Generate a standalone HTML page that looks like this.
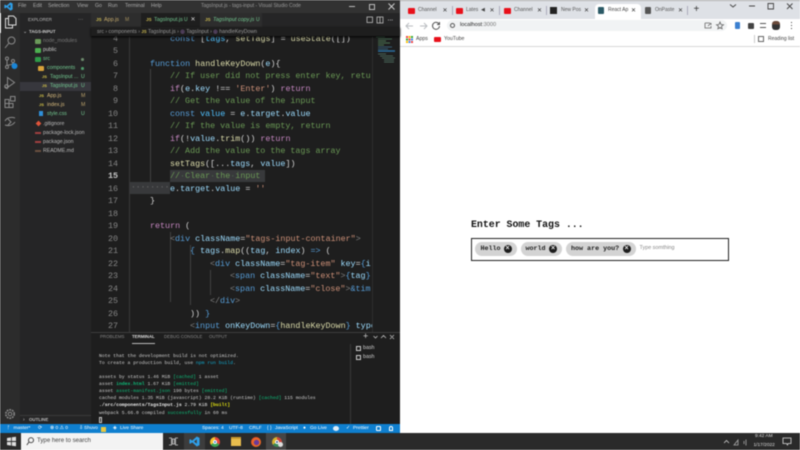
<!DOCTYPE html>
<html><head><meta charset="utf-8"><style>
*{box-sizing:border-box}
html,body{margin:0;padding:0;width:800px;height:450px;overflow:hidden;background:#fff}
body{font-family:"Liberation Sans",sans-serif;position:relative}
#wrap{position:absolute;left:0;top:0;width:800px;height:450px;overflow:hidden;filter:blur(.42px)}
.a{position:absolute;white-space:pre;line-height:1}
.b{position:absolute}
.m{font-family:"Liberation Mono",monospace}
.ln{position:absolute;left:90px;width:28px;text-align:right;color:#858585;font:8.4px/12px "Liberation Mono",monospace}
.c{position:absolute;left:130px;white-space:pre;color:#d4d4d4;font:8.37px/12px "Liberation Mono",monospace}
.k{color:#c586c0}.f{color:#dcdcaa}.v{color:#9cdcfe}.s{color:#ce9178}.g{color:#6a9955}.bl{color:#569cd6}.p{color:#808080}.bc{color:#4fc1ff}
.t5{position:absolute;left:99px;white-space:pre;color:#ccc;font:4.76px/7px "Liberation Mono",monospace}
.gr{color:#0dbc79}.cy{color:#11a8cd}.yl{color:#e5e510}
.side{position:absolute;font-size:5.2px;line-height:8px;white-space:pre;color:#ccc}
.tab{position:absolute;top:4px;height:13px;font-size:5px;line-height:13px;color:#555;white-space:pre}
.yt{position:absolute;width:7px;height:5.5px;top:8px;background:#e8101a;border-radius:1px}
.sb{position:absolute;top:424.5px;font-size:4.9px;line-height:8px;color:#fff;white-space:pre}
.x{position:absolute;top:6.5px;font-size:6px;line-height:8px;color:#333}
.sep{position:absolute;top:6px;width:1px;height:9px;background:#aab}
.tag{position:absolute;top:241.5px;height:14.5px;background:#d3d3d3;border-radius:7.5px}
.tag span{position:absolute;left:5.5px;top:0;font:bold 6.7px/14.5px "Liberation Mono",monospace;color:#222;white-space:pre}
.tag i{position:absolute;top:3.25px;width:8px;height:8px;border-radius:50%;background:#1c1c1c;color:#eee;font:normal bold 7px/8px "Liberation Sans",sans-serif;text-align:center}
</style></head><body><div id="wrap">

<!-- VS Code -->
<div class="b" style="left:0;top:0;width:400px;height:433px;background:#1e1e1e"></div>
<div class="b" style="left:0;top:0;width:400px;height:13px;background:#323232"></div>
<svg class="b" style="left:4px;top:2px" width="9" height="9" viewBox="0 0 24 24"><path d="M17 1l6 3v16l-6 3L7 14l-4 3-2-1V8l2-1 4 3zM17 7l-6 5 6 5z" fill="#2f9fe8" fill-rule="evenodd"/></svg>
<div class="a" style="left:18px;top:3.5px;font-size:5.2px;color:#aaa">File</div>
<div class="a" style="left:33px;top:3.5px;font-size:5.2px;color:#aaa">Edit</div>
<div class="a" style="left:48px;top:3.5px;font-size:5.2px;color:#aaa">Selection</div>
<div class="a" style="left:77px;top:3.5px;font-size:5.2px;color:#aaa">View</div>
<div class="a" style="left:95px;top:3.5px;font-size:5.2px;color:#aaa">Go</div>
<div class="a" style="left:108px;top:3.5px;font-size:5.2px;color:#aaa">Run</div>
<div class="a" style="left:125px;top:3.5px;font-size:5.2px;color:#aaa">Terminal</div>
<div class="a" style="left:151px;top:3.5px;font-size:5.2px;color:#aaa">Help</div>
<div class="a" style="left:201px;top:3.5px;font-size:5px;color:#999">TagsInput.js - tags-input - Visual Studio Code</div>
<div class="b" style="left:349px;top:6px;width:6px;height:1px;background:#bbb"></div>
<div class="b" style="left:369px;top:3.5px;width:6px;height:6px;border:1px solid #bbb"></div>
<svg class="b" style="left:388px;top:3px" width="7" height="7" viewBox="0 0 7 7"><path d="M.5.5l6 6M6.5.5l-6 6" stroke="#ccc"/></svg>

<!-- activity bar -->
<div class="b" style="left:0;top:13px;width:20px;height:411px;background:#2c2c2c"></div>
<div class="b" style="left:0;top:13px;width:1px;height:20px;background:#ddd"></div>
<svg class="b" style="left:4px;top:15px" width="13" height="14" viewBox="0 0 13 14" fill="none" stroke="#ddd" stroke-width="1"><path d="M4.5 1h5l2.500 2.500V10H4.500zM4.500 3.500H1.500V13H8.500V10"/></svg>
<svg class="b" style="left:4px;top:36px" width="12" height="13" viewBox="0 0 12 13" fill="none" stroke="#8a8a8a" stroke-width="1"><circle cx="7.500" cy="4.500" r="3.500"/><path d="M5 7l-4 5"/></svg>
<svg class="b" style="left:4px;top:56px" width="14" height="14" viewBox="0 0 14 14" fill="none" stroke="#8a8a8a" stroke-width="1"><circle cx="3" cy="2.500" r="1.500"/><circle cx="3" cy="11" r="1.500"/><circle cx="9" cy="5" r="1.500"/><path d="M3 4v5.500M4 9c3 0 5-1 5-2.500"/><circle cx="10.500" cy="10" r="3" fill="#1a85d6" stroke="none"/></svg>
<svg class="b" style="left:4px;top:76px" width="12" height="14" viewBox="0 0 12 14" fill="none" stroke="#8a8a8a" stroke-width="1"><path d="M3.500 1.500l7 5-7 5zM1 10.500l2.500 2.500"/><circle cx="2.500" cy="10.500" r="1.800"/></svg>
<svg class="b" style="left:4px;top:96px" width="12" height="13" viewBox="0 0 12 13" fill="none" stroke="#8a8a8a" stroke-width="1"><path d="M1 3.500h4v4h4v4H1zM1 7.500h4v4M6.500.5h4.500v4.500H6.500z"/></svg>
<svg class="b" style="left:4px;top:116px" width="12" height="12" viewBox="0 0 12 12" fill="none" stroke="#8a8a8a" stroke-width="1"><path d="M1 5c2-4 7-4 10-3M1 9c3 1 7 1 10-3M4 3l3 3-3 3"/></svg>
<svg class="b" style="left:4px;top:408px" width="12" height="12" viewBox="0 0 12 12" fill="none" stroke="#8a8a8a" stroke-width="1"><circle cx="6" cy="6" r="1.800"/><circle cx="6" cy="6" r="4.200" stroke-dasharray="1.800 .9" stroke-width="1.600"/></svg>

<!-- sidebar -->
<div class="b" style="left:20px;top:13px;width:71px;height:411px;background:#252526"></div>
<div class="b" style="left:20px;top:82px;width:71px;height:9px;background:#37373d"></div>
<div class="side" style="left:28px;top:16px;font-size:4.4px;color:#bbb">EXPLORER</div>
<div class="side" style="left:78px;top:16px;color:#aaa">···</div>
<div class="side" style="left:29px;top:28px;font-weight:bold;font-size:4.4px;color:#ccc">TAGS-INPUT</div>
<div class="side" style="left:23px;top:28px;color:#ccc;font-size:5px">⌄</div>
<div class="side" style="left:43px;top:37px;color:#777">node_modules</div>
<div class="b" style="left:35px;top:38.5px;width:6px;height:5px;background:#6b9a5a;border-radius:1px"></div>
<div class="side" style="left:43px;top:46px;color:#ccc">public</div>
<div class="b" style="left:35px;top:47.5px;width:6px;height:5px;background:#4cb050;border-radius:1px"></div>
<div class="side" style="left:43px;top:55px;color:#73c991">src</div>
<div class="b" style="left:35px;top:56.5px;width:6px;height:5px;background:#2e9a48;border-radius:1px"></div>
<div class="side" style="left:47px;top:64px;color:#73c991">components</div>
<div class="b" style="left:38px;top:65.5px;width:6px;height:5px;background:#d9a23a;border-radius:1px"></div>
<div class="b" style="left:81px;top:58px;width:2.5px;height:2.5px;border-radius:50%;background:#6c8a6c"></div>
<div class="b" style="left:81px;top:67px;width:2.5px;height:2.5px;border-radius:50%;background:#4f9a6a"></div>
<div class="side" style="left:50px;top:73px;color:#73c991">TagsInput ...</div>
<div class="side" style="left:50px;top:82px;color:#73c991">TagsInput.js</div>
<div class="side" style="left:42px;top:73px;color:#d8c74a;font-size:4px;font-weight:bold">JS</div>
<div class="side" style="left:42px;top:82px;color:#d8c74a;font-size:4px;font-weight:bold">JS</div>
<div class="side" style="left:81px;top:73px;color:#73c991">U</div>
<div class="side" style="left:81px;top:82px;color:#73c991">U</div>
<div class="side" style="left:39px;top:92px;color:#d8c74a;font-size:4px;font-weight:bold">JS</div>
<div class="side" style="left:47px;top:92px;color:#d7ba7d">App.js</div>
<div class="side" style="left:81px;top:92px;color:#b8a06a">M</div>
<div class="side" style="left:39px;top:101px;color:#d8c74a;font-size:4px;font-weight:bold">JS</div>
<div class="side" style="left:47px;top:101px;color:#d7ba7d">index.js</div>
<div class="side" style="left:81px;top:101px;color:#b8a06a">M</div>
<div class="b" style="left:39px;top:111px;width:4px;height:5px;background:#2f8fd8"></div>
<div class="side" style="left:47px;top:110px;color:#73c991">style.css</div>
<div class="side" style="left:81px;top:110px;color:#73c991">U</div>
<div class="b" style="left:36px;top:121px;width:5px;height:5px;background:#e0543a;transform:rotate(45deg) scale(.8)"></div>
<div class="side" style="left:43px;top:120px;color:#bbb">.gitignore</div>
<div class="b" style="left:35px;top:132px;width:6px;height:2px;background:#a04040"></div>
<div class="side" style="left:43px;top:129px;color:#bbb">package-lock.json</div>
<div class="b" style="left:35px;top:141px;width:6px;height:2px;background:#a04040"></div>
<div class="side" style="left:43px;top:138px;color:#bbb">package.json</div>
<div class="b" style="left:35px;top:150px;width:6px;height:2px;background:#6a5040"></div>
<div class="side" style="left:43px;top:147px;color:#bbb">README.md</div>
<div class="b" style="left:20px;top:415px;width:71px;height:1px;background:#3a3a3a"></div>
<div class="side" style="left:29px;top:416px;font-weight:bold;font-size:4.4px;color:#bbb">OUTLINE</div>
<div class="side" style="left:23px;top:416px;color:#ccc;font-size:5px">›</div>

<!-- tabs -->
<div class="b" style="left:91px;top:13px;width:309px;height:14px;background:#252526"></div>
<div class="b" style="left:91px;top:13px;width:50px;height:14px;background:#2d2d2d"></div>
<div class="b" style="left:141px;top:13px;width:59px;height:14px;background:#1e1e1e"></div>
<div class="b" style="left:200px;top:13px;width:62px;height:14px;background:#2d2d2d"></div>
<div class="a" style="left:96px;top:18px;font-size:4.6px;font-weight:bold;color:#cdbb50">JS</div>
<div class="a" style="left:104px;top:17.5px;font-size:5.4px;color:#c9ad6d">App.js</div>
<div class="a" style="left:125px;top:17.5px;font-size:5px;color:#a08d5d">M</div>
<div class="a" style="left:146px;top:18px;font-size:4.6px;font-weight:bold;color:#cdbb50">JS</div>
<div class="a" style="left:154px;top:17.5px;font-size:5.4px;color:#73c991">TagsInput.js</div>
<div class="a" style="left:184px;top:17.5px;font-size:5px;color:#73c991">U</div>
<div class="a" style="left:190.5px;top:17px;font-size:6px;color:#ddd">✕</div>
<div class="a" style="left:205px;top:18px;font-size:4.6px;font-weight:bold;color:#cdbb50">JS</div>
<div class="a" style="left:213px;top:17.5px;font-size:5.4px;font-style:italic;color:#73c991">TagsInput copy.js</div>
<div class="a" style="left:256px;top:17.5px;font-size:5px;color:#73c991">U</div>
<svg class="b" style="left:366px;top:16px" width="28" height="8" viewBox="0 0 28 8" fill="none" stroke="#bbb" stroke-width=".8"><rect x="1" y="1" width="5.500" height="5.500"/><rect x="11" y="1" width="6" height="6"/><path d="M14 1v6"/><path d="M24 4h.8M25.800 4h.8M22 4h.8" stroke-width="1"/></svg>

<!-- breadcrumbs -->
<div class="b" style="left:91px;top:27px;width:309px;height:9px;background:#1e1e1e;box-shadow:0 1px 2px #000;z-index:3"></div>
<div class="a" style="left:97px;top:29.5px;font-size:5.2px;color:#999;z-index:4">src › components › <b style="color:#cdbb50;font-size:4.300px">JS</b> TagsInput.js › <span style="color:#b180d7">◎</span> TagsInput › <span style="color:#b180d7">◎</span> handleKeyDown</div>

<!-- gutter -->
<div class="b" style="left:150px;top:69px;width:1px;height:120px;background:#404040"></div>
<div class="b" style="left:129px;top:32px;width:1px;height:300px;background:#383838"></div>
<div class="b" style="left:170px;top:232px;width:1px;height:70px;background:#404040"></div>
<div class="b" style="left:190px;top:245px;width:1px;height:60px;background:#404040"></div>
<div class="b" style="left:210px;top:270px;width:1px;height:25px;background:#404040"></div>
<!-- highlights -->
<div class="b" style="left:170px;top:170px;width:95px;height:11.5px;background:#38393b"></div>
<div class="b" style="left:129.5px;top:181.5px;width:40.5px;height:12.5px;background:#38393b"></div>
<div class="a m" style="left:131px;top:184px;font-size:8px;color:#6a6a6a">········</div>

<!-- line numbers -->
<div class="ln" style="top:32.700px">4</div><div class="ln" style="top:45.200px">5</div><div class="ln" style="top:57.700px">6</div><div class="ln" style="top:70.200px">7</div><div class="ln" style="top:82.700px">8</div><div class="ln" style="top:95.200px">9</div><div class="ln" style="top:107.700px">10</div><div class="ln" style="top:120.200px">11</div><div class="ln" style="top:132.700px">12</div><div class="ln" style="top:145.200px">13</div><div class="ln" style="top:157.700px">14</div><div class="ln" style="top:170.200px;color:#c6c6c6;font-weight:bold">15</div><div class="ln" style="top:182.700px">16</div><div class="ln" style="top:195.200px">17</div><div class="ln" style="top:207.700px">18</div><div class="ln" style="top:220.200px">19</div><div class="ln" style="top:232.700px">20</div><div class="ln" style="top:245.200px">21</div><div class="ln" style="top:257.700px">22</div><div class="ln" style="top:270.200px">23</div><div class="ln" style="top:282.700px">24</div><div class="ln" style="top:295.200px">25</div><div class="ln" style="top:307.700px">26</div><div class="ln" style="top:320.200px">27</div>

<!-- code -->
<div style="position:absolute;left:0;top:0;width:372px;height:332px;overflow:hidden">
<div class="c" style="top:32.700px">        <span class="bl">const</span> [<span class="bc">tags</span>, <span class="f">setTags</span>] = <span class="f">useState</span>([])</div>
<div class="c" style="top:57.700px;left:150px"><span class="bl">function</span> <span class="f">handleKeyDown</span>(<span class="v">e</span>){</div>
<div class="c" style="top:70.200px;left:170px;color:#6a9955">// If user did not press enter key, retu</div>
<div class="c" style="top:82.700px;left:170px"><span class="k">if</span>(<span class="v">e</span>.<span class="v">key</span> !== <span class="s">'Enter'</span>) <span class="k">return</span></div>
<div class="c" style="top:95.200px;left:170px;color:#6a9955">// Get the value of the input</div>
<div class="c" style="top:107.700px;left:170px"><span class="bl">const</span> <span class="bc">value</span> = <span class="v">e</span>.<span class="v">target</span>.<span class="v">value</span></div>
<div class="c" style="top:120.200px;left:170px;color:#6a9955">// If the value is empty, return</div>
<div class="c" style="top:132.700px;left:170px"><span class="k">if</span>(!<span class="v">value</span>.<span class="f">trim</span>()) <span class="k">return</span></div>
<div class="c" style="top:145.200px;left:170px;color:#6a9955">// Add the value to the tags array</div>
<div class="c" style="top:157.700px;left:170px"><span class="f">setTags</span>([...<span class="v">tags</span>, <span class="v">value</span>])</div>
<div class="c" style="top:170.200px;left:170px;color:#6a9955">//<span style="color:#4e6a4e">·</span>Clear<span style="color:#4e6a4e">·</span>the<span style="color:#4e6a4e">·</span>input</div>
<div class="c" style="top:182.700px;left:170px"><span class="v">e</span>.<span class="v">target</span>.<span class="v">value</span> = <span class="s">''</span></div>
<div class="c" style="top:195.200px;left:150px">}</div>
<div class="c" style="top:220.200px;left:150px"><span class="k">return</span> (</div>
<div class="c" style="top:232.700px;left:170px"><span class="p">&lt;</span><span class="bl">div</span> <span class="v">className</span>=<span class="s">"tags-input-container"</span><span class="p">&gt;</span></div>
<div class="c" style="top:245.200px;left:190px"><span class="bl">{</span> <span class="v">tags</span>.<span class="f">map</span>((<span class="v">tag</span>, <span class="v">index</span>) <span class="bl">=&gt;</span> (</div>
<div class="c" style="top:257.700px;left:210px"><span class="p">&lt;</span><span class="bl">div</span> <span class="v">className</span>=<span class="s">"tag-item"</span> <span class="v">key</span>=<span class="bl">{</span><span class="v">i</span></div>
<div class="c" style="top:270.200px;left:230px"><span class="p">&lt;</span><span class="bl">span</span> <span class="v">className</span>=<span class="s">"text"</span><span class="p">&gt;</span><span class="bl">{</span><span class="v">tag</span><span class="bl">}</span></div>
<div class="c" style="top:282.700px;left:230px"><span class="p">&lt;</span><span class="bl">span</span> <span class="v">className</span>=<span class="s">"close"</span><span class="p">&gt;</span><span class="bl">&amp;tim</span></div>
<div class="c" style="top:295.200px;left:210px"><span class="p">&lt;/</span><span class="bl">div</span><span class="p">&gt;</span></div>
<div class="c" style="top:307.700px;left:190px">)) <span class="bl">}</span></div>
<div class="c" style="top:320.200px;left:190px"><span class="p">&lt;</span><span class="bl">input</span> <span class="v">onKeyDown</span>=<span class="bl">{</span><span class="f">handleKeyDown</span><span class="bl">}</span> <span class="v">type</span></div>
</div>

<!-- minimap -->
<div class="b" style="left:372px;top:27px;width:28px;height:305px;background:#1e1e1e;border-left:1px solid #2e2e2e"></div>
<svg class="b" style="left:375px;top:36px" width="20" height="30" viewBox="0 0 20 30" stroke-width=".7"><path d="M1 1h9M3 3h14" stroke="#4a7a5a"/><path d="M3 5h8M3 7h12M3 9h6" stroke="#5b8f63"/><path d="M3 11h14M3 13h10" stroke="#3f6f8f"/><path d="M3 15h17" stroke="#2a6fa0" stroke-width="1.400"/><path d="M3 18h8M5 20h13M7 22h13M9 24h10M9 26h10" stroke="#577a6a"/></svg>

<!-- terminal panel -->
<div class="b" style="left:91px;top:332px;width:309px;height:92px;background:#1e1e1e;border-top:1px solid #3d3d3d"></div>
<div class="a" style="left:100px;top:334.5px;font-size:4.4px;color:#888">PROBLEMS</div>
<div class="a" style="left:132px;top:334.5px;font-size:4.4px;color:#ddd;font-weight:bold">TERMINAL</div>
<div class="b" style="left:132px;top:343px;width:23px;height:1px;background:#bbb"></div>
<div class="a" style="left:164px;top:334.5px;font-size:4.4px;color:#888">DEBUG CONSOLE</div>
<div class="a" style="left:209px;top:334.5px;font-size:4.4px;color:#888">OUTPUT</div>
<div class="a" style="left:363px;top:331.5px;font-size:9px;color:#ccc">+</div>
<svg class="b" style="left:373px;top:333px" width="26" height="8" viewBox="0 0 26 8" fill="none" stroke="#bbb" stroke-width=".8"><path d="M.5 3l2 2 2-2M8 5l2.500-2.500L13 5M17 2l4 4M21 2l-4 4"/></svg>
<div class="b" style="left:350px;top:344px;width:1px;height:80px;background:#383838"></div>
<div class="b" style="left:355.5px;top:345.5px;width:5px;height:5px;border:.7px solid #ccc"></div>
<div class="a" style="left:363px;top:345.5px;font-size:5.300px;color:#ccc">bash</div>
<div class="b" style="left:355.5px;top:354.5px;width:5px;height:5px;border:.7px solid #ccc"></div>
<div class="a" style="left:363px;top:354.5px;font-size:5.300px;color:#ccc">bash</div>

<div class="t5" style="top:352.5px">Note that the development build is not optimized.</div>
<div class="t5" style="top:359.8px">To create a production build, use <span class="cy">npm run build</span>.</div>
<div class="t5" style="top:374px">assets by status 1.46 MiB <span class="gr">[cached]</span> 1 asset</div>
<div class="t5" style="top:381px">asset <span class="gr"><b>index.html</b></span> 1.67 KiB <span class="gr">[emitted]</span></div>
<div class="t5" style="top:388px">asset <span class="gr">asset-manifest.json</span> 190 bytes <span class="gr">[emitted]</span></div>
<div class="t5" style="top:395.2px">cached modules 1.35 MiB (javascript) 28.2 KiB (runtime) <span class="gr">[cached]</span> 115 modules</div>
<div class="t5" style="top:402.4px;color:#eee"><b>./src/components/TagsInput.js</b> 2.79 KiB <span class="yl"><b>[built]</b></span></div>
<div class="t5" style="top:409.6px">webpack 5.66.0 compiled <span class="gr">successfully</span> in 60 ms</div>
<div class="b" style="left:99px;top:417px;width:3px;height:6px;border:.7px solid #ccc"></div>

<!-- status bar -->
<div class="b" style="left:0;top:424px;width:400px;height:9px;background:#0f7fcf"></div>
<div class="sb" style="left:7px">ᚠ</div>
<div class="sb" style="left:13.5px">master*</div>
<div class="sb" style="left:38px">⟳</div>
<div class="sb" style="left:50px">⊗ 0 ⚠ 0</div>
<div class="sb" style="left:84px">Shuvo</div>
<div class="sb" style="left:79px">⇩</div>
<div class="b" style="left:101px;top:426.5px;width:5px;height:5px;background:#e8c840"></div>
<div class="sb" style="left:113px">◈</div>
<div class="sb" style="left:120px">Live Share</div>
<div class="sb" style="left:202px">Spaces: 4</div>
<div class="sb" style="left:229px">UTF-8</div>
<div class="sb" style="left:249px">CRLF</div>
<div class="sb" style="left:267px">{ }</div>
<div class="sb" style="left:275px">JavaScript</div>
<div class="sb" style="left:303px">●</div>
<div class="sb" style="left:310px">Go Live</div>
<div class="b" style="left:333px;top:426px;width:6px;height:5px;background:#dcecf8;border-radius:50%"></div>
<div class="sb" style="left:346px">✓</div>
<div class="sb" style="left:353px">Prettier</div>
<div class="b" style="left:376px;top:426px;width:5px;height:5px;border:.8px solid #fff;border-radius:1px"></div>
<div class="b" style="left:389px;top:426px;width:4px;height:5px;border:.8px solid #fff;border-radius:2px 2px 0 0"></div>

<!-- Chrome -->
<div class="b" style="left:400px;top:0;width:400px;height:433px;background:#fff"></div>
<div class="b" style="left:400px;top:0;width:400px;height:19px;background:#dee1e6"></div>
<div class="b" style="left:400px;top:0;width:400px;height:1px;background:#aaa"></div>
<div class="b" style="left:595px;top:4px;width:46px;height:16px;background:#fff;border-radius:4px 4px 0 0"></div>
<div class="yt" style="left:408px"></div><div class="tab" style="left:418px">Channel</div><div class="x" style="left:442.5px">✕</div>
<div class="sep" style="left:452px"></div>
<div class="yt" style="left:456px"></div><div class="tab" style="left:466px">Lates</div><div class="a" style="left:481px;top:8px;font-size:5px;color:#444">◀</div><div class="x" style="left:489.5px">✕</div>
<div class="sep" style="left:499px"></div>
<div class="yt" style="left:504px"></div><div class="tab" style="left:514px">Channel</div><div class="x" style="left:537px">✕</div>
<div class="sep" style="left:546px"></div>
<div class="b" style="left:550px;top:7px;width:7px;height:7px;background:#222"></div><div class="tab" style="left:561px">New Pos</div><div class="x" style="left:584px">✕</div>
<div class="b" style="left:598px;top:7px;width:6px;height:7px;background:#2b5a66;border-radius:1px"></div><div class="tab" style="left:608px;color:#444">React Ap</div><div class="x" style="left:631px">✕</div>
<div class="b" style="left:645px;top:7px;width:6px;height:7px;background:#555;border-radius:1px"></div><div class="tab" style="left:655px">OnPaste</div><div class="x" style="left:678px">✕</div>
<div class="sep" style="left:687px"></div>
<div class="a" style="left:693.5px;top:5px;font-size:10px;color:#333">+</div>
<svg class="b" style="left:728px;top:2px" width="70" height="8" viewBox="0 0 70 8" fill="none" stroke="#444" stroke-width=".9"><path d="M2 2.500l3 2.500 3-2.500M21 4h6M40 1.500h5.500v5.500H40zM59 1.500l5.500 5.500M64.500 1.500L59 7"/></svg>
<div class="b" style="left:400px;top:19px;width:400px;height:14px;background:#fff"></div>
<svg class="b" style="left:404px;top:21px" width="28" height="10" viewBox="0 0 28 10" fill="none" stroke-width="1"><path d="M9 5H2M5 2L2 5l3 3" stroke="#b9bcc0"/><path d="M16 5h7M20 2l3 3-3 3" stroke="#b9bcc0"/></svg>
<svg class="b" style="left:431px;top:21px" width="10" height="10" viewBox="0 0 10 10" fill="none" stroke="#555" stroke-width="1"><path d="M8 3a3.500 3.500 0 1 0 .5 2M8.500 1v2.500H6"/></svg>
<div class="b" style="left:447px;top:20px;width:280px;height:11px;background:#f1f3f4;border-radius:6px"></div>
<div class="b" style="left:449.5px;top:23px;width:5px;height:5px;border:.7px solid #555;border-radius:50%"></div>
<div class="a" style="left:460px;top:23px;font-size:5.6px;color:#222">localhost<span style="color:#777">:3000</span></div>
<svg class="b" style="left:703px;top:21px" width="24" height="9" viewBox="0 0 24 9" fill="none" stroke="#666" stroke-width=".8"><path d="M2 2h5M2 2v5h6V5M5 5l3-3M8 2v2"/><path d="M17 1l1 2.500 2.500.3-2 1.500.6 2.500-2.100-1.300-2.100 1.300.6-2.500-2-1.500 2.500-.3z"/></svg>
<div class="b" style="left:734.5px;top:22px;width:5px;height:7px;background:#3c80d0;border-radius:1px"></div>
<div class="b" style="left:748px;top:22.5px;width:6px;height:6px;background:#444;border-radius:1px"></div>
<div class="b" style="left:760px;top:23px;width:6px;height:5px;border-top:1px solid #555;border-bottom:1px solid #555"></div>
<div class="b" style="left:772px;top:21px;width:8px;height:9px;background:linear-gradient(#6a4a3a 0 40%,#333 40%);border-radius:3px"></div>
<div class="b" style="left:790.5px;top:22px;width:1px;height:1px;background:#444;box-shadow:0 3px #444,0 6px #444"></div>
<div class="b" style="left:400px;top:33px;width:400px;height:14px;background:#fff;border-bottom:1px solid #d8d8d8"></div>
<div class="b" style="left:406px;top:36px;width:1.500px;height:1.500px;background:#e44;box-shadow:2.500px 0 #fb0,5px 0 #3a3,0 2.500px #3a3,2.500px 2.500px #e44,5px 2.500px #48e,0 5px #fb0,2.500px 5px #48e,5px 5px #e44"></div>
<div class="a" style="left:416px;top:36.5px;font-size:5.200px;color:#444">Apps</div>
<div class="yt" style="left:434px;top:36.5px"></div>
<div class="a" style="left:444px;top:36.5px;font-size:5.200px;color:#444">YouTube</div>
<div class="b" style="left:753.5px;top:35px;width:1px;height:8px;background:#ccc"></div>
<div class="b" style="left:758px;top:36px;width:6px;height:6px;border:.7px solid #666"></div>
<div class="a" style="left:768px;top:36.5px;font-size:5px;color:#444">Reading list</div>

<!-- page -->
<div class="a" style="left:471px;top:220px;font:bold 9.9px/10px 'Liberation Mono',monospace;color:#111">Enter Some Tags ...</div>
<div class="b" style="left:471px;top:237.5px;width:258px;height:23.5px;border:1.500px solid #222"></div>
<div class="tag" style="left:475px;width:42px"><span>Hello</span><i style="left:28.5px">×</i></div>
<div class="tag" style="left:520.5px;width:41.5px"><span style="left:5px">world</span><i style="left:28.5px">×</i></div>
<div class="tag" style="left:566px;width:69.5px"><span style="left:5px">how are you?</span><i style="left:56.5px">×</i></div>
<div class="a" style="left:639.5px;top:246px;font-size:5.400px;color:#888">Type somthing</div>

<!-- taskbar -->
<div class="b" style="left:0;top:433px;width:800px;height:17px;background:#2a2a2a"></div>
<svg class="b" style="left:6px;top:436px" width="11" height="11" viewBox="0 0 11 11" fill="#ddd"><path d="M1 2l4-.6V5H1zM5.800 1.300L10 .7V5H5.800zM1 6h4v3.600L1 9zM5.800 6H10v4.300l-4.200-.6z"/></svg>
<div class="b" style="left:21px;top:433px;width:142px;height:17px;background:#f3f3f3"></div>
<svg class="b" style="left:26px;top:437px" width="8" height="9" viewBox="0 0 8 9" fill="none" stroke="#333" stroke-width=".9"><circle cx="5" cy="3.200" r="2.500"/><path d="M3 5L.8 8"/></svg>
<div class="a" style="left:37px;top:438px;font-size:6.100px;color:#444">Type here to search</div>
<svg class="b" style="left:169px;top:437px" width="9" height="9" viewBox="0 0 9 9" fill="none" stroke="#ccc" stroke-width=".8"><path d="M0 1h2.500v7H0M9 1H6.500v7H9M3.500 2h2v5h-2z"/></svg>
<div class="b" style="left:184px;top:433px;width:21px;height:17px;background:#3c3c3c"></div>
<svg class="b" style="left:189px;top:436px" width="11" height="11" viewBox="0 0 24 24"><path d="M17 1l6 3v16l-6 3L7 14l-4 3-2-1V8l2-1 4 3zM17 7l-6 5 6 5z" fill="#2f9fe8" fill-rule="evenodd"/></svg>
<div class="b" style="left:210px;top:436.5px;width:10px;height:10px;border-radius:50%;background:conic-gradient(#e8453a 0 33%,#3aa655 33% 66%,#f5c02e 66%)"></div>
<div class="b" style="left:213px;top:439.5px;width:4px;height:4px;border-radius:50%;background:#3b82d6;border:.6px solid #fff"></div>
<div class="b" style="left:231px;top:437px;width:10px;height:9px;background:#e8bd4e;border-top:2px solid #c99a30"></div>
<div class="b" style="left:251px;top:436.5px;width:10px;height:10px;border-radius:50%;background:radial-gradient(circle at 55% 55%,#6a3a9a 0 30%,#f0701e 40%,#e23a3a 90%)"></div>
<div class="b" style="left:266px;top:433px;width:20px;height:17px;background:#454545"></div>
<div class="b" style="left:272px;top:436.5px;width:10px;height:10px;border-radius:50%;background:conic-gradient(#c9453a 0 33%,#3a8a55 33% 66%,#d5b02e 66%)"></div>
<div class="b" style="left:275px;top:439.5px;width:4px;height:4px;border-radius:50%;background:#3b5a86;border:.6px solid #fff"></div>
<div class="b" style="left:278px;top:442px;width:5px;height:5px;border-radius:50%;background:#ddd"></div>

<svg class="b" style="left:723.5px;top:437.5px" width="26" height="8" viewBox="0 0 26 8" fill="none" stroke="#ccc" stroke-width=".8"><path d="M0 5l2.500-2.500L5 5"/><path d="M10 7l4-5v5zM20 3v3M22 1.500v6" stroke="#aaa"/></svg>
<div class="a" style="left:755px;top:435px;font-size:4.800px;color:#ddd">9:42 AM</div>
<div class="a" style="left:753.5px;top:443.5px;font-size:4.800px;color:#ddd">1/17/2022</div>
<svg class="b" style="left:782px;top:437px" width="10" height="9" viewBox="0 0 10 9" fill="none" stroke="#ddd" stroke-width=".8"><path d="M1 1h8v5.500H6L5.500 8 4.500 6.500H1z"/></svg>

</div></body></html>
